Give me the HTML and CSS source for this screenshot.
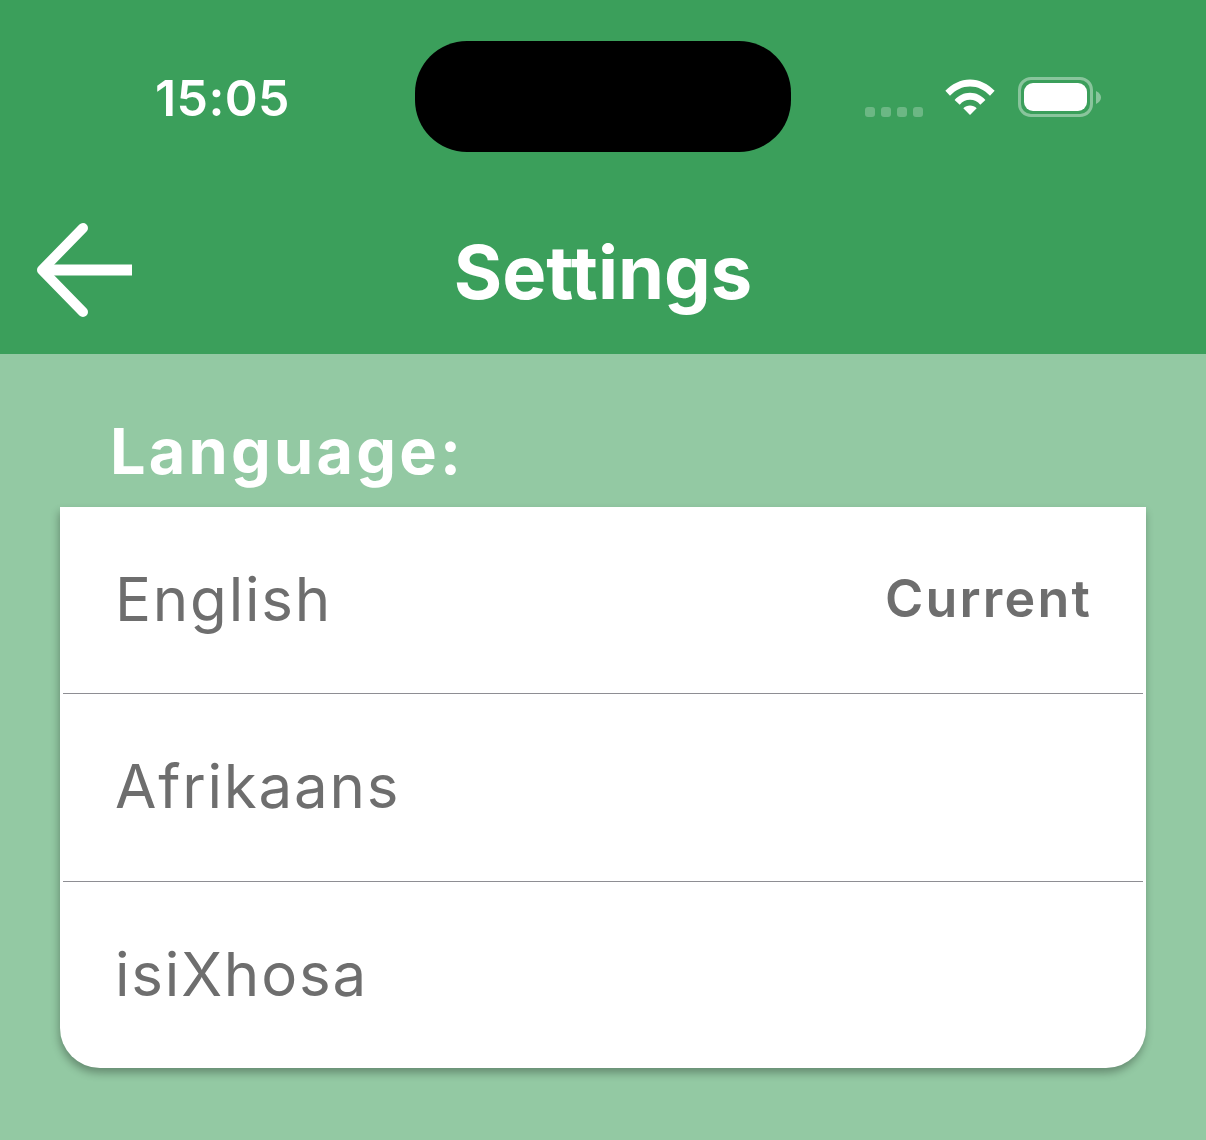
FILE: index.html
```html
<!DOCTYPE html>
<html lang="en">
<head>
    <meta charset="UTF-8">
    <meta name="viewport" content="width=device-width, initial-scale=1.0">
    <title>Settings</title>
    <link rel="stylesheet" href="styles.css">
</head>
<body>
    <header class="top">
        <div class="status-bar">
            <div class="time">15:05</div>
            <div class="island"></div>
            <div class="status-icons">
                <div class="signal"><i></i><i></i><i></i><i></i></div>
                <svg class="wifi" viewBox="0 0 50 38" width="52" height="39">
                    <path d="M1 13.500C7 7 16 2.500 25 2.500s18 4.500 24 11l-4.500 4.800C39 12.500 32.500 9.300 25 9.300S11 12.500 5.500 18.300z" fill="#fff"/>
                    <path d="M10 22.300C14 18 19 15.300 25 15.300S36 18 40 22.300L35 27C32.500 24 29 22.200 25 22.200s-7.500 1.800-10 4.800z" fill="#fff"/>
                    <path d="M18.500 30.500c1.700-1.700 4-2.700 6.500-2.700s4.800 1 6.500 2.700L25 37z" fill="#fff"/>
                </svg>
                <div class="battery"><div class="battery-fill"></div></div>
                <svg class="battery-cap" viewBox="0 0 5 13" width="5" height="13">
                    <path d="M0 0c3 1.500 5 3.500 5 6.500S3 11.500 0 13z" fill="#fff" fill-opacity="0.4"/>
                </svg>
            </div>
        </div>
        <div class="nav-bar">
            <button class="back-btn" aria-label="Back">
                <svg viewBox="0 0 96 96" width="96" height="96">
                    <path d="M96 48H12" fill="none" stroke="#fff" stroke-width="11"/>
                    <path d="M47 6 6 48l41 42" fill="none" stroke="#fff" stroke-width="10" stroke-linecap="round" stroke-linejoin="round"/>
                </svg>
            </button>
            <h1>Settings</h1>
        </div>
    </header>

    <main class="content">
        <h2>Language:</h2>
        <div class="lang-list">
            <div class="lang-row">
                <span>English</span>
                <span class="current">Current</span>
            </div>
            <div class="lang-row">
                <span>Afrikaans</span>
            </div>
            <div class="lang-row">
                <span>isiXhosa</span>
            </div>
        </div>
    </main>
</body>
</html>
```

FILE: styles.css
```css
* {
    box-sizing: border-box;
    margin: 0;
    padding: 0;
}

body {
    font-family: Inter, 'Liberation Sans', sans-serif;
    background: #93c9a3;
    min-height: 100vh;
    overflow: hidden;
}

.top {
    background: #3b9f5b;
    height: 354px;
    color: #fff;
}

.status-bar {
    height: 194px;
    display: grid;
    grid-template-columns: 415px 376px 1fr;
    padding-top: 41px;
}

.time {
    font-size: 50px;
    font-weight: 600;
    line-height: 115px;
    padding-left: 155px;
    letter-spacing: 0.4px;
}

.island {
    height: 111px;
    background: #000;
    border-radius: 52px;
}

.status-icons {
    display: flex;
    align-items: center;
    height: 112px;
    padding-left: 74px;
}

.signal {
    display: flex;
    gap: 6px;
    margin-top: 29px;
    margin-right: 21px;
}

.signal i {
    width: 10px;
    height: 10px;
    border-radius: 3px;
    background: rgba(255, 255, 255, 0.25);
}

.wifi {
    margin-right: 22px;
    margin-top: -1px;
}

.battery {
    width: 75px;
    height: 40px;
    border: 3px solid rgba(255, 255, 255, 0.4);
    border-radius: 13px;
    padding: 3px;
}

.battery-fill {
    height: 100%;
    background: #fff;
    border-radius: 9px;
}

.battery-cap {
    margin-left: 3px;
}

.nav-bar {
    height: 160px;
    display: flex;
    justify-content: center;
    align-items: center;
    position: relative;
}

.back-btn {
    position: absolute;
    left: 36px;
    top: 28px;
    width: 96px;
    height: 96px;
    background: none;
    border: none;
}

h1 {
    font-size: 74px;
    font-weight: 700;
    line-height: 88px;
    margin-top: -5px;
}

.content {
    padding: 0 60px;
}

h2 {
    color: #fff;
    font-size: 63px;
    font-weight: 700;
    line-height: 72px;
    padding: 61px 0 0 50px;
    height: 153px;
    letter-spacing: 3.2px;
}

.lang-list {
    background: #fff;
    border-radius: 0 0 40px 40px;
    box-shadow: -1px 5px 9px rgba(0, 0, 0, 0.3);
}

.lang-row {
    height: 187px;
    margin: 0 3px;
    padding: 0 51px 3px 52px;
    display: flex;
    justify-content: space-between;
    align-items: center;
    border-bottom: 1px solid #8e8e93;
    color: #6e6e6e;
    font-size: 60px;
    letter-spacing: 1.8px;
}

.lang-row:nth-child(2) {
    height: 188px;
}

.lang-row:last-child {
    height: 186px;
    border-bottom: none;
}

.current {
    font-size: 52px;
    font-weight: 600;
    letter-spacing: 2.2px;
}
```
